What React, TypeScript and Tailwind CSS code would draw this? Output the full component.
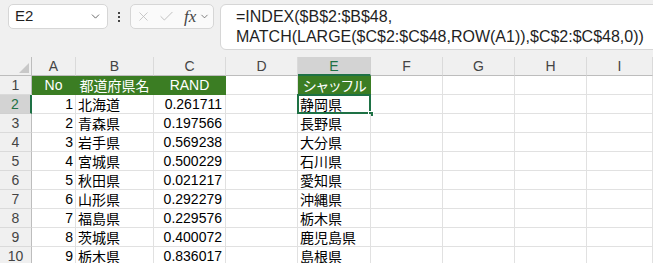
import { ChevronDown, X, Check } from 'lucide-react'

const rows = [
  { no: 1, pref: '北海道', rand: '0.261711', shuf: '静岡県' },
  { no: 2, pref: '青森県', rand: '0.197566', shuf: '長野県' },
  { no: 3, pref: '岩手県', rand: '0.569238', shuf: '大分県' },
  { no: 4, pref: '宮城県', rand: '0.500229', shuf: '石川県' },
  { no: 5, pref: '秋田県', rand: '0.021217', shuf: '愛知県' },
  { no: 6, pref: '山形県', rand: '0.292279', shuf: '沖縄県' },
  { no: 7, pref: '福島県', rand: '0.229576', shuf: '栃木県' },
  { no: 8, pref: '茨城県', rand: '0.400072', shuf: '鹿児島県' },
  { no: 9, pref: '栃木県', rand: '0.836017', shuf: '島根県' },
]

const cols = ['A', 'B', 'C', 'D', 'E', 'F', 'G', 'H', 'I']

const cell = 'h-[19px] border-r border-b border-[#e1e1e1] bg-white text-[14px] leading-[18px] text-black whitespace-nowrap overflow-visible'
const green = 'h-[19px] border-r border-b border-[#3b7d23] bg-[#3b7d23] text-[14px] leading-[18px] text-white text-center whitespace-nowrap'

function ColHeader({ label }: { label: string }) {
  const sel = label === 'E'
  return (
    <div
      className={
        sel
          ? 'h-[19px] bg-[#d3d3d3] border-r border-[#d0d0d0] border-b-2 border-b-[#1e7145] text-center text-[14px] leading-[18px] text-[#1e7145]'
          : 'h-[19px] bg-[#f0f0f0] border-r border-[#dadada] border-b border-b-[#bdbdbd] text-center text-[14px] leading-[18px] text-[#444]'
      }
    >
      {label}
    </div>
  )
}

function RowHeader({ n }: { n: number }) {
  const sel = n === 2
  return (
    <div
      className={
        sel
          ? 'h-[19px] bg-[#d3d3d3] border-b border-[#d0d0d0] border-r-2 border-r-[#1e7145] text-center text-[14px] leading-[18px] text-[#1e7145]'
          : 'h-[19px] bg-[#f0f0f0] border-b border-[#dadada] border-r border-r-[#bdbdbd] text-center text-[14px] leading-[18px] text-[#444]'
      }
    >
      {n}
    </div>
  )
}

export default function App() {
  return (
    <div className="w-[653px] h-[263px] overflow-hidden bg-[#f0f0f0] font-['Liberation_Sans','Noto_Sans_CJK_JP',sans-serif]">
      {/* ツールバー */}
      <div className="flex items-start h-[57px] pt-[4px] pl-[8px]">
        <div className="shrink-0 w-[100px] h-[25px] bg-white border border-[#d6d6d6] rounded-[5px] flex items-center justify-between pl-[6px] pr-[5px]">
          <span className="text-[15px] text-[#1f1f1f]">E2</span>
          <ChevronDown className="w-[13px] h-[13px] text-[#555]" strokeWidth={1.6} />
        </div>
        <div className="shrink-0 w-[22px] h-[25px] flex flex-col items-center justify-center gap-[2px]">
          <span className="w-[2px] h-[2px] bg-[#444]" />
          <span className="w-[2px] h-[2px] bg-[#444]" />
          <span className="w-[2px] h-[2px] bg-[#444]" />
        </div>
        <div className="shrink-0 w-[84px] h-[25px] bg-[#fafafa] border border-[#d6d6d6] rounded-[5px] flex items-center pl-[5px] gap-[7px]">
          <X className="w-[15px] h-[15px] text-[#bdbdbd]" strokeWidth={1.3} />
          <Check className="w-[17px] h-[17px] text-[#bdbdbd]" strokeWidth={1.3} />
          <span className="font-['Liberation_Serif',serif] italic text-[17px] leading-none text-[#444] ml-[2px]">fx</span>
          <ChevronDown className="w-[11px] h-[11px] text-[#555] -ml-[4px]" strokeWidth={1.6} />
        </div>
        <div className="shrink-0 ml-[6px] w-[450px] h-[46px] bg-white border border-[#d6d6d6] rounded-[6px] pl-[15px] pt-[2px] text-[16px] leading-[20px] text-[#1f1f1f]">
          <div>=INDEX($B$2:$B$48,</div>
          <div>MATCH(LARGE($C$2:$C$48,ROW(A1)),$C$2:$C$48,0))</div>
        </div>
      </div>

      {/* シート */}
      <div className="grid grid-cols-[32px_44px_78px_72px_72px_73px_72px_72px_72px_1fr]">
        <div className="h-[19px] bg-[#f0f0f0] border-r border-b border-[#bdbdbd] flex items-end justify-end pr-[2px] pb-[2px]">
          <div className="w-0 h-0 border-l-[10px] border-l-transparent border-b-[10px] border-b-[#c8c8c8]" />
        </div>
        {cols.map((c) => (
          <ColHeader key={c} label={c} />
        ))}

        {/* 1行目 */}
        <RowHeader n={1} />
        <div className={green}>No</div>
        <div className={green + ' text-[13px] font-["Noto_Sans_CJK_JP",sans-serif]'}>都道府県名</div>
        <div className={green}>RAND</div>
        <div className={cell} />
        <div className={green + ' text-[13px] tracking-[-1.5px] font-["Noto_Sans_CJK_JP",sans-serif]'}>シャッフル</div>
        <div className={cell} />
        <div className={cell} />
        <div className={cell} />
        <div className={cell} />

        {rows.map((r, i) => (
          <div key={r.no} className="contents">
            <RowHeader n={i + 2} />
            <div className={cell + ' text-right pr-[2px]'}>{r.no}</div>
            <div className={cell + ' pl-[2px] font-["Noto_Sans_CJK_JP",sans-serif]'}>{r.pref}</div>
            <div className={cell + ' text-right pr-[3px]'}>{r.rand}</div>
            <div className={cell} />
            <div className={cell + ' relative pl-[2px] font-["Noto_Sans_CJK_JP",sans-serif]'}>
              {r.shuf}
              {i === 0 && (
                <>
                  <div className="absolute -left-[1px] -top-[1px] w-[74px] h-[20px] border-2 border-[#1e7145]" />
                  <div className="absolute -right-[4px] -bottom-[4px] w-[6px] h-[6px] bg-[#1e7145] border border-white" />
                </>
              )}
            </div>
            <div className={cell} />
            <div className={cell} />
            <div className={cell} />
            <div className={cell} />
          </div>
        ))}
      </div>
    </div>
  )
}
